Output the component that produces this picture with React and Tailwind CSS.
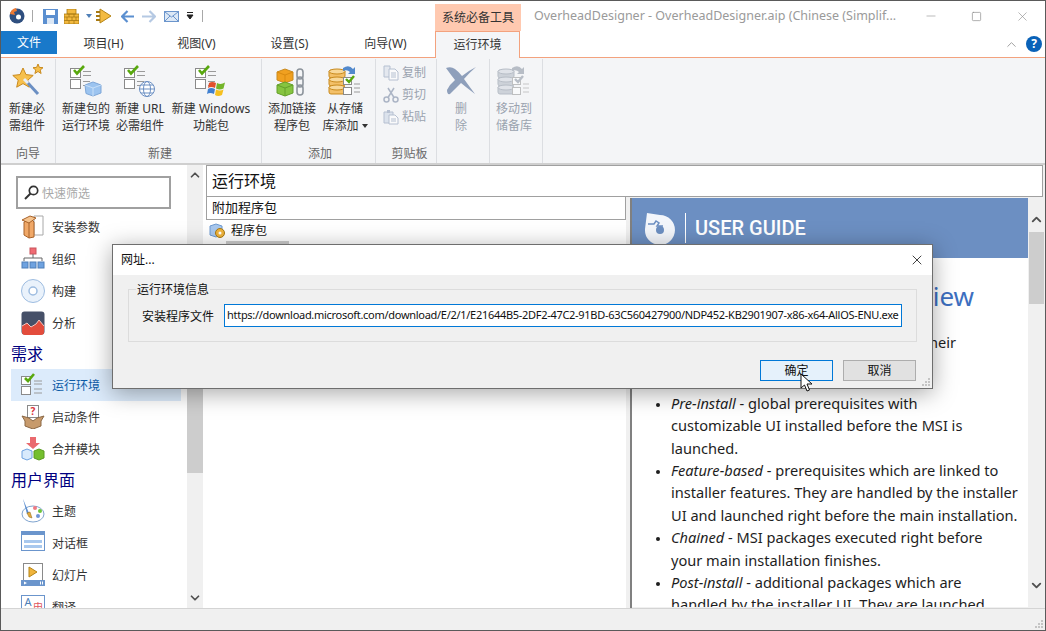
import { ChevronUp, ChevronDown, Minus, Square, X } from "lucide-react";

const CheckBase = () => (
  <>
    <rect x="0.5" y="3.5" width="10" height="9" fill="#fff" stroke="#8a8a8a" />
    <rect x="0.5" y="14.5" width="10" height="9" fill="#fff" stroke="#8a8a8a" />
    <path d="M13 6.5h8M13 10.5h8M13 16.5h7M13 20.5h5" stroke="#9a9a9a" />
    <path d="M4 5l3 3.5L14 1" fill="none" stroke="#58a80e" strokeWidth="2.6" />
  </>
);

const StarWand = () => (
  <svg width="34" height="34" viewBox="0 0 34 34">
    <path d="M28 1l1.4 3.4 3.6.3-2.8 2.3.9 3.5-3.1-2-3.1 2 .9-3.5L23 4.7l3.6-.3z" fill="#f6c04d" stroke="#c98a1e" />
    <path d="M13 5l3 6.6 7.2.8-5.4 4.8 1.5 7-6.3-3.6L6.700 24.200l1.500-7-5.400-4.800 7.200-.8z" fill="#f6c04d" stroke="#c98a1e" />
    <path d="M17 19l11 12" stroke="#6b8fc3" strokeWidth="3" />
    <path d="M14 16l4 4" stroke="#e8eef7" strokeWidth="3" />
  </svg>
);

const PackageCheck = () => (
  <svg width="32" height="32" viewBox="0 0 32 32">
    <CheckBase />
    <path d="M15 20l8-3 8 3v8l-8 3-7-2.500z" fill="#9cc4f0" stroke="#7ea7d8" />
    <path d="M15 20l8 3 8-3M23 23v8" fill="none" stroke="#c9e0f8" />
  </svg>
);

const GlobeCheck = () => (
  <svg width="32" height="32" viewBox="0 0 32 32">
    <CheckBase />
    <circle cx="23" cy="24" r="7.500" fill="#fff" stroke="#6b8fc3" />
    <ellipse cx="23" cy="24" rx="3.500" ry="7.500" fill="none" stroke="#6b8fc3" />
    <path d="M15.500 24h15M17 20h12M17 28h12" stroke="#6b8fc3" />
  </svg>
);

const WindowsCheck = () => (
  <svg width="32" height="32" viewBox="0 0 32 32">
    <CheckBase />
    <path d="M14 18q3-2 7 0l-1 5q-4-2-7 0z" fill="#e2502c" />
    <path d="M22 18q4 2 8-.5l-1.500 6q-4 2-7.500 0z" fill="#74b52a" />
    <path d="M13 24q3-2 7 0l-1 5q-4-2-7 0z" fill="#3f7fd0" />
    <path d="M21 24.500q4 2 7.500 0l-1.500 5.500q-4 2-7 0z" fill="#f6c020" />
  </svg>
);

const LinkPackage = () => (
  <svg width="32" height="30" viewBox="0 0 32 30">
    <path d="M1 5l8-3 8 3v8l-8 3-8-3z" fill="#f0a020" stroke="#c98a1e" />
    <path d="M1 5l8 3 8-3M9 8v8" fill="none" stroke="#d98a10" />
    <path d="M1 18l8-3 8 3v8l-8 3-8-3z" fill="#86c440" stroke="#64a02a" />
    <path d="M1 18l8 3 8-3M9 21v8" fill="none" stroke="#64a02a" />
    <rect x="21" y="2" width="6" height="10" rx="3" fill="none" stroke="#8d949c" strokeWidth="1.600" />
    <rect x="21" y="10" width="6" height="10" rx="3" fill="none" stroke="#8d949c" strokeWidth="1.600" />
    <rect x="21" y="18" width="6" height="10" rx="3" fill="none" stroke="#8d949c" strokeWidth="1.600" />
  </svg>
);

const StorageAdd = ({ muted }) => (
  <svg width="34" height="32" viewBox="0 0 34 32" opacity={muted ? 0.5 : 1}>
    {[5, 13, 21].map((y) => (
      <g key={y}>
        <rect x="1" y={y} width="16" height="8" rx="2" fill={muted ? "#a8b0bd" : "#f3c069"} stroke={muted ? "#7c8797" : "#c98a1e"} />
        <ellipse cx="9" cy={y + 1.500} rx="8" ry="2.500" fill={muted ? "#cdd3dc" : "#f8d89a"} stroke={muted ? "#7c8797" : "#c98a1e"} />
      </g>
    ))}
    <path d="M15 3q6-4 10 1l2-2v7h-7l2-2q-3-3-7-1z" fill={muted ? "#7c8797" : "#5289cc"} />
    <rect x="15.500" y="12.500" width="8" height="7" fill="#fff" stroke="#8a8a8a" />
    <rect x="15.500" y="22.500" width="8" height="7" fill="#fff" stroke="#8a8a8a" />
    <path d="M18 14l3 3 5-6" fill="none" stroke={muted ? "#7c8797" : "#58a80e"} strokeWidth="2.400" />
    <path d="M26 19h6M26 23h6M26 27h6" stroke="#9a9a9a" />
  </svg>
);

const DeleteMark = () => (
  <svg width="32" height="32" viewBox="0 0 32 32">
    <path d="M1 3q5-2 9 1 4 3 7 7 6-5 14-9-7 6-12 12 5 7 11 15-8-6-14-11-6 6-11 11-3 1-3-4 3-6 8-10Q6 10 1 3z" fill="#8e9fbb" />
  </svg>
);

const CopyIcon = () => (
  <svg width="16" height="16" viewBox="0 0 16 16" opacity="0.55">
    <path d="M1 1h6v11H1z" fill="#d7deea" stroke="#8496b3" />
    <path d="M6 4h6l3 3v8H6z" fill="#fff" stroke="#8496b3" />
    <path d="M8 8h5M8 10h5M8 12h5" stroke="#8496b3" />
  </svg>
);

const CutIcon = () => (
  <svg width="16" height="16" viewBox="0 0 16 16" opacity="0.6">
    <circle cx="3.500" cy="12.500" r="2.500" fill="none" stroke="#7d8ca6" strokeWidth="1.500" />
    <circle cx="12.500" cy="12.500" r="2.500" fill="none" stroke="#7d8ca6" strokeWidth="1.500" />
    <path d="M5 10.500L11 1M11 10.500L5 1" stroke="#7d8ca6" strokeWidth="1.500" />
  </svg>
);

const PasteIcon = () => (
  <svg width="16" height="16" viewBox="0 0 16 16" opacity="0.55">
    <path d="M1 3h9v11H1z" fill="#c8d3e4" stroke="#8496b3" />
    <path d="M4 1h3v3H4z" fill="#8496b3" />
    <path d="M6 6h6l3 3v6H6z" fill="#fff" stroke="#8496b3" />
    <path d="M8 10h5M8 12h5" stroke="#8496b3" />
  </svg>
);

const tabs = [
  ["项目(H)", "w-[93px]"],
  ["视图(V)", "w-[93px]"],
  ["设置(S)", "w-[93px]"],
  ["向导(W)", "w-[99px]"],
];

function TitleBar() {
  return (
    <div className="flex h-[30px] shrink-0 items-start bg-white">
      <div className="flex h-[30px] w-[434px] items-center">
        <svg className="ml-[8px]" width="16" height="16" viewBox="0 0 16 16">
          <circle cx="8" cy="8" r="7.500" fill="#2f4f7f" />
          <circle cx="9.500" cy="9" r="2.500" fill="#fff" />
          <path d="M1 6q1-5 6-6l1 3-3 1 1 3z" fill="#ef7a32" />
        </svg>
        <div className="ml-[7px] h-[12px] w-px bg-[#a8a8a8]" />
        <svg className="ml-[10px]" width="15" height="15" viewBox="0 0 15 15">
          <path d="M0 0h15v15H0z" fill="#5b8fd0" />
          <path d="M3 1h9v5H3z" fill="#fff" />
          <path d="M4 9h7v6H4z" fill="#dce8f6" />
        </svg>
        <svg className="ml-[6px]" width="15" height="15" viewBox="0 0 15 15">
          <path d="M0 5h15v10H0zM3 0h9v5H3z" fill="#f3b93f" stroke="#a77912" strokeWidth="0.800" />
          <path d="M0 8h15M0 11.500h15M5 5v3M10 5v3M3 8v3.500M8 8v3.500M12 8v3.500M5 11.500V15M10 11.500V15" stroke="#a77912" strokeWidth="0.800" />
        </svg>
        <svg className="ml-[7px]" width="6" height="4" viewBox="0 0 6 4"><path d="M0 0h6L3 4z" fill="#4f7fb8" /></svg>
        <svg className="ml-[4px]" width="15" height="16" viewBox="0 0 15 16">
          <path d="M4 1l11 7-11 7z" fill="#f3bb42" stroke="#b58518" />
          <path d="M0 3h4v2H0zM0 7h4v2H0zM0 11h4v2H0z" fill="#a77912" />
        </svg>
        <svg className="ml-[10px]" width="13" height="13" viewBox="0 0 13 13"><path d="M6.500 1L1 6.500 6.500 12M1 6.500h12" fill="none" stroke="#5b8fd0" strokeWidth="2.200" /></svg>
        <svg className="ml-[8px]" width="14" height="13" viewBox="0 0 14 13"><path d="M7.500 1L13 6.500 7.500 12M13 6.500H0" fill="none" stroke="#b5c9e3" strokeWidth="2.200" /></svg>
        <svg className="ml-[8px]" width="15" height="11" viewBox="0 0 15 11">
          <rect x="0.500" y="0.500" width="14" height="10" fill="#dce8f6" stroke="#6b95cc" />
          <path d="M1 1l6.500 5L14 1M1 10l5-5M14 10L9 5" fill="none" stroke="#6b95cc" />
        </svg>
        <svg className="ml-[7px]" width="8" height="8" viewBox="0 0 8 8"><path d="M1 0.500h6M1 3h6L4 7z" stroke="#222" fill="#222" /></svg>
        <div className="ml-[8px] h-[12px] w-px bg-[#a8a8a8]" />
      </div>
      <div className="mt-[3px] flex h-[27px] w-[86px] items-center justify-center bg-[#ffc9b0] text-[12px] text-[#333]">系统必备工具</div>
      <div className="ml-[13px] mt-[6px] text-[12.500px] text-[#9a9a9a] whitespace-nowrap">OverheadDesigner - OverheadDesigner.aip (Chinese (Simplif...</div>
      <div className="ml-auto flex h-[30px] items-center text-[#8c8c8c]">
        <div className="flex w-[45px] justify-center"><Minus size={14} strokeWidth={1} /></div>
        <div className="flex w-[46px] justify-center"><Square size={11} strokeWidth={1.500} /></div>
        <div className="flex w-[46px] justify-center"><X size={15} strokeWidth={1} /></div>
      </div>
    </div>
  );
}

function TabRow() {
  return (
    <div className="flex h-[27px] shrink-0 items-start border-b border-[#f3a27e] bg-white text-[12px] text-[#333]">
      <div className="flex h-[23px] w-[56px] items-center justify-center bg-[#1979ca] text-white">文件</div>
      {tabs.map(([label, width]) => (
        <div key={label} className={`flex h-[26px] items-center justify-center ${width}`}>{label}</div>
      ))}
      <div className="flex h-[27px] w-[85px] items-center justify-center border-x border-t border-[#f3a27e] bg-[#f4f5f7]">运行环境</div>
      <ChevronUp className="ml-[484px] mt-[6px] text-[#9a9a9a]" size={15} strokeWidth={1.500} />
      <div className="ml-[7px] mt-[5px] flex h-[16px] w-[16px] items-center justify-center rounded-full bg-[#0a62b8] text-[12px] font-bold leading-none text-white">?</div>
    </div>
  );
}

function BigButton({ icon, lines, width, muted }) {
  return (
    <div className={`flex shrink-0 flex-col items-center ${width}`}>
      <div className="flex h-[36px] items-end justify-center">{icon}</div>
      <div className={`mt-[3px] text-center text-[12px] leading-[17px] whitespace-nowrap ${muted ? "text-[#9aa3af]" : "text-[#333]"}`}>
        {lines.map((line, i) => (
          <div key={i}>{line}</div>
        ))}
      </div>
    </div>
  );
}

function Group({ label, width, children, muted }) {
  return (
    <div className={`mt-[1px] flex h-[104px] flex-col border-r border-[#dcdee2] ${width}`}>
      <div className="flex h-[83px] pt-[2px]">{children}</div>
      <div className={`mt-auto -mb-[1px] text-center text-[12px] leading-[20px] ${muted ? "text-[#6a6a6a]" : "text-[#666]"}`}>{label}</div>
    </div>
  );
}

function SmallButton({ icon, label }) {
  return (
    <div className="flex h-[22px] items-center gap-[3px] text-[12px] text-[#9aa3af]">
      {icon}
      <span>{label}</span>
    </div>
  );
}

function Ribbon() {
  return (
    <div className="flex h-[107px] shrink-0 border-b-2 border-[#cfcfcf] bg-[#f4f5f7]">
      <Group label="向导" width="w-[55px]">
        <BigButton width="w-[52px]" icon={<StarWand />} lines={["新建必", "需组件"]} />
      </Group>
      <Group label="新建" width="w-[206px] pl-[3px]">
        <BigButton width="w-[54px]" icon={<PackageCheck />} lines={["新建包的", "运行环境"]} />
        <BigButton width="w-[54px]" icon={<GlobeCheck />} lines={["新建 URL", "必需组件"]} />
        <BigButton width="w-[88px]" icon={<WindowsCheck />} lines={["新建 Windows", "功能包"]} />
      </Group>
      <Group label="添加" width="w-[114px] pl-[3px]">
        <BigButton width="w-[54px]" icon={<LinkPackage />} lines={["添加链接", "程序包"]} />
        <BigButton
          width="w-[52px]"
          icon={<StorageAdd />}
          lines={[
            "从存储",
            <span key="x" className="inline-flex items-center gap-[3px]">库添加<svg width="6" height="4" viewBox="0 0 6 4"><path d="M0 0h6L3 4z" fill="#333" /></svg></span>,
          ]}
        />
      </Group>
      <Group label="剪贴板" width="w-[61px] pl-[7px]" muted>
        <div className="flex flex-col pt-[1px]">
          <SmallButton icon={<CopyIcon />} label="复制" />
          <SmallButton icon={<CutIcon />} label="剪切" />
          <SmallButton icon={<PasteIcon />} label="粘贴" />
        </div>
      </Group>
      <Group label="" width="w-[53px]">
        <BigButton width="w-[48px]" icon={<DeleteMark />} lines={["删", "除"]} muted />
      </Group>
      <Group label="" width="w-[53px]">
        <BigButton width="w-[48px]" icon={<StorageAdd muted />} lines={["移动到", "储备库"]} muted />
      </Group>
    </div>
  );
}

const SideIcons = {
  box: (
    <svg width="24" height="24" viewBox="0 0 24 24">
      <path d="M13 1h9v19h-9z" fill="#fff" stroke="#a8a8a8" />
      <path d="M3 7l7-3 3 3v15l-5 1-5-3z" fill="#f0a868" stroke="#a8622a" />
      <path d="M1 5l7 3 7-5-6-2zM8 8v15" fill="#f6c48e" stroke="#a8622a" />
    </svg>
  ),
  org: (
    <svg width="24" height="24" viewBox="0 0 24 24">
      <rect x="9" y="1" width="6" height="6" fill="#ef6b73" stroke="#c9555c" />
      <path d="M12 7v4M3 14v-3h18v3" fill="none" stroke="#666" />
      {[1, 9, 17].map((x) => (
        <rect key={x} x={x} y="15" width="6" height="6" fill="#6ea2e0" stroke="#4f7fb8" />
      ))}
    </svg>
  ),
  disc: (
    <svg width="24" height="24" viewBox="0 0 24 24">
      <circle cx="12" cy="12" r="11.500" fill="#eaf2fb" stroke="#9dbce0" />
      <circle cx="12" cy="12" r="4" fill="#fff" stroke="#9dbce0" strokeWidth="1.500" />
    </svg>
  ),
  chart: (
    <svg width="24" height="24" viewBox="0 0 24 24">
      <rect x="0.500" y="0.500" width="23" height="23" rx="3" fill="#465068" />
      <path d="M1 15l5-3 4 4 5-3 3-4 5 6v6q0 3-3 3H4q-3 0-3-3z" fill="#e34c3c" />
      <path d="M1 15l5-3 4 4 5-3 3-4 5 6" fill="none" stroke="#f6c7c0" />
    </svg>
  ),
  check: (
    <svg width="24" height="24" viewBox="0 0 24 24">
      <rect x="0.500" y="3.500" width="9" height="8" fill="#fff" stroke="#8a8a8a" />
      <rect x="0.500" y="13.500" width="9" height="8" fill="#fff" stroke="#8a8a8a" />
      <path d="M13 8h8M13 11h8M13 16h8M13 20h8" stroke="#9a9a9a" />
      <path d="M4 5l3 3 6-7" fill="none" stroke="#58a80e" strokeWidth="2.600" />
    </svg>
  ),
  condition: (
    <svg width="24" height="24" viewBox="0 0 24 24">
      <rect x="6.500" y="0.500" width="11" height="12" fill="#fff" stroke="#8a8a8a" />
      <text x="12" y="10" textAnchor="middle" fontSize="10" fontWeight="700" fill="#d9343c">?</text>
      <path d="M1 11l7 2 4 3 4-3 7-2-3 5v5l-8 3-8-3v-5z" fill="#c79a6c" stroke="#8b6845" />
    </svg>
  ),
  merge: (
    <svg width="24" height="24" viewBox="0 0 24 24">
      <path d="M9 0h6v6h4l-7 6-7-6h4z" fill="#ea6a6e" />
      <path d="M1 14l5-2 5 2v7l-5 2-5-2z" fill="#d8eafc" stroke="#6ea2e0" />
      <path d="M13 14l5-2 5 2v7l-5 2-5-2z" fill="#74bf2e" stroke="#5a9a22" />
    </svg>
  ),
  theme: (
    <svg width="24" height="24" viewBox="0 0 24 24">
      <ellipse cx="12" cy="15" rx="11" ry="8" fill="#fff" stroke="#7fa4cf" />
      <circle cx="14" cy="9" r="2" fill="#ef7a82" />
      <circle cx="19" cy="12" r="2" fill="#6cc43a" />
      <circle cx="17" cy="17" r="2" fill="#6e95d6" />
      <path d="M2 0l6 14-2 1z" fill="#5c8ed0" />
      <path d="M6 14l3-1 2 6-3-1z" fill="#e5aa3c" stroke="#8a6a1e" strokeWidth="0.500" />
    </svg>
  ),
  dialog: (
    <svg width="24" height="24" viewBox="0 0 24 24">
      <rect x="0.500" y="0.500" width="23" height="19" fill="#fff" stroke="#6b95cc" />
      <rect x="0" y="0" width="24" height="4" fill="#6b95cc" />
      <rect x="3" y="9" width="18" height="3" fill="#a8c8ee" />
      <rect x="3" y="14" width="18" height="3" fill="#a8c8ee" />
    </svg>
  ),
  slide: (
    <svg width="24" height="24" viewBox="0 0 24 24">
      <rect x="2.500" y="0.500" width="19" height="18" fill="#fff" stroke="#8a8a8a" />
      <path d="M8 4l8 5-8 5z" fill="#f0b43c" stroke="#b58518" />
      <rect x="0" y="17" width="24" height="6" fill="#6b95cc" />
      <path d="M3 18.500l3 1.500-3 1.500zM19 18.500h1v3h-1zM21 18.500h1v3h-1z" fill="#fff" />
    </svg>
  ),
  trans: (
    <svg width="24" height="24" viewBox="0 0 24 24">
      <rect x="0.500" y="0.500" width="23" height="22" fill="#fff" stroke="#6b95cc" />
      <text x="7" y="11" textAnchor="middle" fontSize="11" fill="#4f7fb8">A</text>
      <text x="17" y="16" textAnchor="middle" fontSize="10" fill="#e0555c">申</text>
    </svg>
  ),
};

function SideItem({ icon, label, active }) {
  return (
    <div className={`ml-[10px] flex h-[32px] w-[170px] items-center gap-[7px] pl-[10px] text-[12px] ${active ? "bg-[#dcebfb] text-[#0b5aa6]" : "text-[#333]"}`}>
      <span className="flex w-[24px] shrink-0">{SideIcons[icon]}</span>
      <span className="mt-[2px]">{label}</span>
    </div>
  );
}

function SideHeading({ children }) {
  return <div className="flex h-[30px] items-center pl-[10px] text-[16px] text-[#000080]">{children}</div>;
}

function Sidebar() {
  return (
    <div className="flex w-[205px] shrink-0 overflow-hidden">
      <div className="h-[443px] w-[186px] shrink-0 overflow-hidden">
        <div className="ml-[15px] mt-[11px] mb-[2px] flex h-[33px] w-[155px] items-center gap-[3px] border-2 border-[#a0a0a0] pl-[6px] text-[12px] text-[#a8a8a8]">
          <svg width="15" height="15" viewBox="0 0 15 15">
            <circle cx="9.500" cy="5.500" r="4.200" fill="#fff" stroke="#333" strokeWidth="1.700" />
            <path d="M6.500 8.500L1 14" stroke="#333" strokeWidth="2" />
          </svg>
          <span className="mt-[2px]">快速筛选</span>
        </div>
        <SideItem icon="box" label="安装参数" />
        <SideItem icon="org" label="组织" />
        <SideItem icon="disc" label="构建" />
        <SideItem icon="chart" label="分析" />
        <SideHeading>需求</SideHeading>
        <SideItem icon="check" label="运行环境" active />
        <SideItem icon="condition" label="启动条件" />
        <SideItem icon="merge" label="合并模块" />
        <SideHeading>用户界面</SideHeading>
        <SideItem icon="theme" label="主题" />
        <SideItem icon="dialog" label="对话框" />
        <SideItem icon="slide" label="幻灯片" />
        <SideItem icon="trans" label="翻译" />
      </div>
      <div className="flex w-[16px] shrink-0 flex-col items-center bg-[#f0f0f0] text-[#505050]">
        <ChevronUp className="mt-[3px]" size={14} strokeWidth={3} />
        <div className="mt-[70px] h-[221px] w-full bg-[#cdcdcd]" />
        <ChevronDown className="mt-auto mb-[3px]" size={14} strokeWidth={3} />
      </div>
    </div>
  );
}

function HelpPanel() {
  return (
    <div className="flex min-w-0 flex-1 border-l-2 border-[#808080]">
      <div className="h-[409px] w-[396px] shrink-0 overflow-hidden bg-white">
        <div className="flex h-[60px] items-center bg-[#6c8fc2] pl-[12px] text-white">
          <svg width="32" height="33" viewBox="0 0 32 33">
            <path d="M3 1l13 2a15 15 0 1 1-15 14z" fill="#f3f6fb" />
            <circle cx="16" cy="18" r="4" fill="#6c8fc2" />
            <path d="M4 12h6l2-3 3 2-2 3h6" fill="none" stroke="#6c8fc2" strokeWidth="1.500" />
          </svg>
          <div className="mx-[9px] h-[30px] w-px bg-white" />
          <span className="font-['Roboto',sans-serif] text-[20px] font-medium">USER GUIDE</span>
        </div>
        <div className="h-[18px]" />
        <h1 className="ml-[10px] h-[40px] w-[332px] whitespace-nowrap text-right text-[26px] leading-[40px] text-[#3d6fc0]">Prerequisites Overview</h1>
        <div className="ml-[10px] mt-[15px] w-[314px] text-right text-[14.600px] leading-[22.400px] text-[#1e1e1e]">
          Prerequisites are packages grouped by their
        </div>
        <div className="ml-[10px] h-[22.400px] text-[14.600px] leading-[22.400px] text-[#1e1e1e]">installation order, as follows:</div>
        <ul className="ml-[39px] mt-[16px] list-disc whitespace-nowrap text-[14.600px] leading-[22.400px] text-[#1e1e1e] marker:text-[12px]">
          <li><i>Pre-install</i> - global prerequisites with<br />customizable UI installed before the MSI is<br />launched.</li>
          <li><i>Feature-based</i> - prerequisites which are linked to<br />installer features. They are handled by the installer<br />UI and launched right before the main installation.</li>
          <li><i>Chained</i> - MSI packages executed right before<br />your main installation finishes.</li>
          <li><i>Post-install</i> - additional packages which are<br />handled by the installer UI. They are launched</li>
        </ul>
      </div>
      <div className="flex h-[409px] w-[17px] shrink-0 flex-col items-center bg-[#f0f0f0] text-[#505050]">
        <ChevronUp className="mt-[14px]" size={15} strokeWidth={3} />
        <div className="mt-[5px] h-[72px] w-[15px] bg-[#cdcdcd]" />
        <ChevronDown className="mt-auto mb-[14px]" size={15} strokeWidth={3} />
      </div>
    </div>
  );
}

function Main() {
  return (
    <div className="flex min-w-0 flex-1 flex-col bg-[#f0f0f0] pr-[2px]">
      <div className="flex h-[32px] shrink-0 items-center border border-[#a0a0a0] bg-white pl-[5px] text-[16px] text-[#111]">运行环境</div>
      <div className="flex min-h-0 flex-1 pt-[1px]">
        <div className="-mt-[2px] w-[420px] shrink-0 bg-white text-[#111]">
          <div className="flex h-[24px] items-center border border-[#a0a0a0] pl-[5px] text-[13px]">附加程序包</div>
          <div className="flex h-[21px] items-center gap-[5px] pl-[3px] text-[12px]">
            <svg width="17" height="15" viewBox="0 0 17 15">
              <path d="M1 3l6-2 6 2v8l-6 3-6-2z" fill="#a8c8ee" stroke="#6e9ad0" />
              <circle cx="11" cy="10" r="4.500" fill="#f0b43c" stroke="#a77912" />
              <circle cx="11" cy="10" r="1.500" fill="#fff" />
            </svg>
            程序包
          </div>
          <div className="ml-[20px] flex h-[20px] w-[63px] items-center gap-[6px] whitespace-nowrap bg-[#cccccc] pl-[5px] text-[12px]">
            <div className="h-[12px] w-[12px] border border-[#b58518] bg-[#f6d67a]" />
            运行库
          </div>
        </div>
        <div className="w-[4px] shrink-0" />
        <HelpPanel />
      </div>
    </div>
  );
}

function Dialog() {
  return (
    <div className="absolute left-[111px] top-[243px] flex h-[145px] w-[821px] flex-col border border-[#6e6e6e] bg-[#f0f0f0] text-[12px] text-[#111] shadow-[0_4px_22px_rgba(0,0,0,0.35)]">
      <div className="flex h-[30px] shrink-0 items-center justify-between bg-white pl-[8px] pr-[7px]">
        网址...
        <X size={16} strokeWidth={1.200} />
      </div>
      <div className="relative ml-[15px] mt-[14px] flex h-[53px] w-[789px] items-start border border-[#dcdcdc] pl-[13px] pt-[14px]">
        <span className="absolute -top-[9px] left-[7px] bg-[#f0f0f0] px-[1px]">运行环境信息</span>
        <span className="mt-[4px] whitespace-nowrap">安装程序文件</span>
        <input
          readOnly
          className="ml-[10px] h-[23px] w-[678px] border-[1.500px] border-[#0078d7] bg-white pb-[3px] pl-[2px] text-[11px] tracking-[-0.29px] outline-none"
          value="https://download.microsoft.com/download/E/2/1/E21644B5-2DF2-47C2-91BD-63C560427900/NDP452-KB2901907-x86-x64-AllOS-ENU.exe"
        />
      </div>
      <div className="mt-[18px] flex justify-end gap-[10px] pr-[16px]">
        <div className="flex h-[21px] w-[73px] items-center justify-center border-[1.500px] border-[#0078d7] bg-[#e5f1fb]">确定</div>
        <div className="flex h-[21px] w-[73px] items-center justify-center border border-[#adadad] bg-[#e1e1e1]">取消</div>
      </div>
      <svg className="absolute bottom-[1px] right-[1px]" width="10" height="10" viewBox="0 0 10 10">
        <path d="M7 1h2v2H7zM4 4h2v2H4zM7 4h2v2H7zM1 7h2v2H1zM4 7h2v2H4zM7 7h2v2H7z" fill="#c4c4c4" />
      </svg>
      <svg className="absolute left-[687px] top-[128px]" width="13" height="19" viewBox="0 0 13 19">
        <path d="M1 1v14l3.500-3 2.500 6 2.500-1-2.500-6h5z" fill="#fff" stroke="#111" />
      </svg>
    </div>
  );
}

export default function App() {
  return (
    <div className="relative flex h-[631px] w-[1046px] flex-col overflow-hidden border border-[#5a5a5a] bg-white font-['Noto_Sans','Noto_Sans_CJK_SC',sans-serif]">
      <TitleBar />
      <TabRow />
      <Ribbon />
      <div className="flex min-h-0 flex-1">
        <Sidebar />
        <Main />
      </div>
      <div className="flex h-[22px] shrink-0 items-end justify-end border-t border-[#d4d4d4] bg-[#f0f0f0] pb-[1px] pr-[1px]">
        <svg width="10" height="10" viewBox="0 0 10 10">
          <path d="M7 1h2v2H7zM4 4h2v2H4zM7 4h2v2H7zM1 7h2v2H1zM4 7h2v2H4zM7 7h2v2H7z" fill="#c4c4c4" />
        </svg>
      </div>
      <Dialog />
    </div>
  );
}
